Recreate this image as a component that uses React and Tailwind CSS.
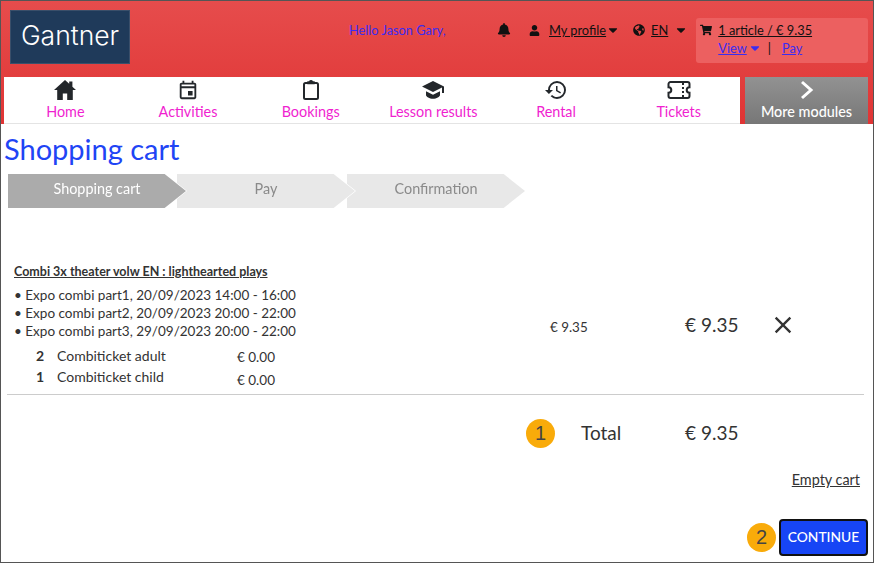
import { FaBell, FaUser, FaGlobeAmericas, FaShoppingCart, FaCaretDown } from 'react-icons/fa';
import { MdOutlineEvent, MdClose, MdHistory } from 'react-icons/md';

function HomeIcon() {
  return (
    <svg width="24" height="22" viewBox="0 0 24 22" fill="currentColor">
      <path d="M12 1L1 11h3.2v10h5.6v-6.5h4.4V21h5.6V11H23l-3.6-3.3V2.5h-3.2v2.3z" />
    </svg>
  );
}

function ClipboardIcon() {
  return (
    <svg width="18" height="22" viewBox="0 0 18 22" fill="none" stroke="currentColor" strokeWidth="2">
      <rect x="2" y="4" width="14" height="16" rx="1.5" />
      <path d="M6 4.5h6V3h-1.6a1.4 1.4 0 0 0-2.8 0H6z" fill="currentColor" strokeWidth="1.4" />
    </svg>
  );
}

function CapIcon() {
  return (
    <svg width="24" height="20" viewBox="0 0 24 20" fill="currentColor">
      <path d="M12 1L1 6.5 12 12l9-4.5V13h2V6.5z" />
      <path d="M5 11.2V15c0 1.8 3.5 3.8 7 3.8s7-2 7-3.8v-3.800l-7 3.500z" />
    </svg>
  );
}

function TicketIcon() {
  return (
    <svg width="24" height="20" viewBox="0 0 24 20" fill="none" stroke="currentColor" strokeWidth="2">
      <path d="M3.5 2h17a2 2 0 0 1 2 2v3.2a2.8 2.8 0 0 0 0 5.6V16a2 2 0 0 1-2 2h-17a2 2 0 0 1-2-2v-3.2a2.8 2.8 0 0 0 0-5.6V4a2 2 0 0 1 2-2z" />
      <path d="M16 3v14" strokeDasharray="2 2" />
    </svg>
  );
}

const NAV = [
  { label: 'Home', icon: <HomeIcon /> },
  { label: 'Activities', icon: <MdOutlineEvent size={22} /> },
  { label: 'Bookings', icon: <ClipboardIcon /> },
  { label: 'Lesson results', icon: <CapIcon /> },
  { label: 'Rental', icon: <MdHistory size={24} /> },
  { label: 'Tickets', icon: <TicketIcon /> },
];

const SESSIONS = [
  'Expo combi part1, 20/09/2023 14:00 - 16:00',
  'Expo combi part2, 20/09/2023 20:00 - 22:00',
  'Expo combi part3, 29/09/2023 20:00 - 22:00',
];

function Step({ label, active, className }) {
  return (
    <div className={`relative [filter:drop-shadow(1px_0_0_white)] ${className}`}>
      <div
        className={`w-[178px] h-[34px] flex items-center justify-center pb-[5px] text-[14.4px] [clip-path:polygon(0_0,88%_0,100%_50%,88%_100%,0_100%)] ${
          active ? 'bg-[#ababab] text-white' : 'bg-[#e8e8e8] text-[#8a8a8a]'
        }`}
      >
        {label}
      </div>
    </div>
  );
}

function Badge({ n }) {
  return (
    <span className="w-[29px] h-[29px] rounded-full bg-[#f9ab0a] text-[#444] flex items-center justify-center text-[20px] font-['Liberation_Sans',sans-serif]">
      {n}
    </span>
  );
}

export default function App() {
  return (
    <div className="w-[874px] h-[563px] border border-[#555] bg-white text-[#333] font-['Lato',sans-serif] overflow-hidden flex flex-col">
      <header className="h-[123px] shrink-0 bg-gradient-to-b from-[#e64c4c] to-[#e03434] pr-[2px] flex flex-col">
        <div className="h-[76px] flex text-[12.8px] leading-[18px] text-[#111] whitespace-nowrap">
          <div className="ml-[9px] mt-[9px] w-[120px] h-[54px] pb-[4px] bg-[#1f3a5a] flex items-center justify-center text-white text-[26.5px] font-['Inter',sans-serif] font-light border border-[#3a4f6a]">
            Gantner
          </div>
          <div className="ml-[219px] mt-[20px] w-[148px] text-[#3b2cf0]">Hello Jason Gary,</div>
          <div className="mt-[22px] h-[14px] flex items-center">
            <FaBell size={14} />
            <FaUser size={11} className="ml-[18px]" />
            <a className="ml-[9px] underline">My profile</a>
            <FaCaretDown size={14} />
            <FaGlobeAmericas size={12} className="ml-[13px]" />
            <a className="ml-[6px] underline">EN</a>
            <FaCaretDown size={14} className="ml-[6px]" />
          </div>
          <div className="ml-[8px] mt-[17px] w-[172px] h-[45px] rounded-[3px] bg-[#ec6060] pl-[4px] pt-[3px]">
            <div className="flex items-center">
              <FaShoppingCart size={12} />
              <a className="ml-[6px] underline">1 article / € 9.35</a>
            </div>
            <div className="ml-[18px] flex items-center">
              <a className="underline text-[#3b2cf0]">View</a>
              <FaCaretDown size={14} className="text-[#3b2cf0] ml-[1px]" />
              <span className="ml-[6px]">|</span>
              <a className="ml-[11px] underline text-[#3b2cf0]">Pay</a>
            </div>
          </div>
        </div>
        <nav className="h-[47px] ml-[3px] flex items-stretch">
          <div className="w-[736px] bg-white border-b border-[#e4e4e4] flex">
            {NAV.map((item) => (
              <a key={item.label} className="flex-1 flex flex-col items-center text-[#f01fd0] text-[14.4px]">
                <span className="h-[26px] flex items-center text-[#23272b]">{item.icon}</span>
                <span className="leading-[17px]">{item.label}</span>
              </a>
            ))}
          </div>
          <a className="ml-[5px] w-[123px] bg-gradient-to-b from-[#929292] to-[#777] text-white text-[14.4px] font-medium flex flex-col items-center">
            <span className="h-[26px] flex items-center">
              <svg width="14" height="20" viewBox="0 0 14 20" fill="none" stroke="currentColor" strokeWidth="3">
                <path d="M2 2l9 8-9 8" />
              </svg>
            </span>
            <span className="leading-[17px]">More modules</span>
          </a>
        </nav>
      </header>

      <main className="flex-1 flex flex-col">
        <h1 className="ml-[3px] mt-[6px] text-[#1f45f5] text-[29px] leading-[37px]">Shopping cart</h1>
        <div className="ml-[7px] mt-[7px] flex">
          <Step label="Shopping cart" active className="z-30" />
          <Step label="Pay" className="-ml-[9px] z-20" />
          <Step label="Confirmation" className="-ml-[8px] z-10" />
        </div>

        <section className="ml-[6px] mr-[9px] mt-[56px] h-[131px] border-b border-[#ccc] flex">
          <div className="w-[500px] pl-[7px] text-[13.5px]">
            <a className="underline font-bold text-[12.5px] leading-[16px] block text-[#333]">Combi 3x theater volw EN : lighthearted plays</a>
            <ul className="mt-[6px] leading-[18px]">
              {SESSIONS.map((s) => (
                <li key={s}>• {s}</li>
              ))}
            </ul>
            <div className="mt-[5px] grid grid-cols-[43px_180px_auto] items-start text-[14px] leading-[21px]">
              <span className="font-bold text-right pr-[13px]">2</span>
              <span>Combiticket adult</span>
              <span className="mt-[3px] text-[13.5px] leading-[18px]">€ 0.00</span>
              <span className="font-bold text-right pr-[13px]">1</span>
              <span>Combiticket child</span>
              <span className="mt-[5px] text-[13.5px] leading-[18px]">€ 0.00</span>
            </div>
          </div>
          <div className="flex pt-[47px] items-start">
            <span className="ml-[43px] mt-[6px] text-[13.4px] w-[135px]">€ 9.35</span>
            <span className="text-[19px] w-[88px]">€ 9.35</span>
            <MdClose size={28} className="-ml-[4px]" />
          </div>
        </section>

        <div className="mt-[23px] flex items-center h-[30px] text-[19px]">
          <span className="ml-[525px]"><Badge n={1} /></span>
          <span className="ml-[26px] w-[104px]">Total</span>
          <span>€ 9.35</span>
        </div>

        <div className="mt-[21px] flex justify-end pr-[13px] text-[14.4px]">
          <a className="underline">Empty cart</a>
        </div>

        <div className="mt-[28px] flex justify-end items-center pr-[5px]">
          <Badge n={2} />
          <button className="ml-[3px] w-[89px] h-[37px] rounded-[4px] bg-[#1745f5] border-2 border-[#111] text-white text-[13.8px] font-medium">
            CONTINUE
          </button>
        </div>
      </main>
    </div>
  );
}
